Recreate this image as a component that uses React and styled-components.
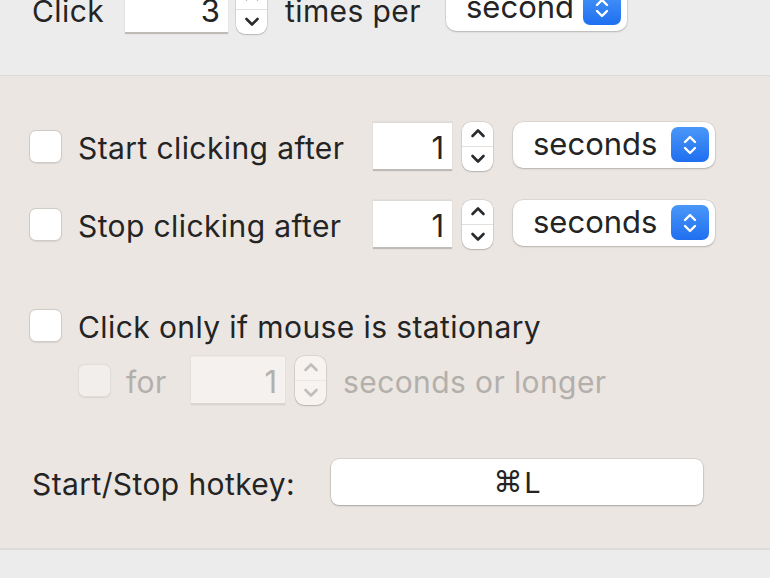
import React from "react";
import styled, { createGlobalStyle } from "styled-components";

const Global = createGlobalStyle`
  html, body { margin: 0; padding: 0; background: #ececec; }
  body { font-family: Inter, "Noto Sans", "DejaVu Sans", sans-serif; color: #242424; }
  * { box-sizing: border-box; }
`;

const Window = styled.div`
  width: 770px;
  height: 578px;
  overflow: hidden;
  display: flex;
  flex-direction: column;
  background: #ececec;
`;

const TopSection = styled.section`
  height: 76px;
  padding-left: 32px;
  border-bottom: 1px solid #dbd9d8;
  flex: none;
`;

const MainSection = styled.section`
  background: #ebe6e2;
  padding: 45px 0 41px 29px;
  border-bottom: 2px solid #dedad7;
  display: flex;
  flex-direction: column;
  flex: none;
`;

const Row = styled.div`
  display: flex;
  align-items: center;
  height: 50px;
  margin-top: ${(p) => p.$mt || 0}px;
  padding-left: ${(p) => p.$indent || 0}px;
`;

const TopRow = styled(Row)`
  margin-top: -16px;
`;

const Label = styled.span`
  font-size: 30px;
  letter-spacing: 0.4px;
  color: ${(p) => (p.$disabled ? "#b3afab" : "#242424")};
  width: ${(p) => (p.$w ? p.$w + "px" : "auto")};
  margin-left: ${(p) => p.$ml || 0}px;
  padding-top: 3px;
  flex: none;
  white-space: nowrap;
  line-height: 1;
`;

const Check = styled.span`
  width: 33px;
  height: 33px;
  flex: none;
  border-radius: 7px;
  background: ${(p) => (p.$disabled ? "#f1eeeb" : "#ffffff")};
  border: 1px solid ${(p) => (p.$disabled ? "#e2deda" : "#cfcbc7")};
  box-shadow: 0 0.5px 1px rgba(0, 0, 0, 0.08);
`;

const NumField = styled.div`
  width: ${(p) => p.$w}px;
  height: 49px;
  flex: none;
  margin-left: ${(p) => p.$ml || 0}px;
  background: ${(p) => (p.$disabled ? "#f4f1ef" : "#ffffff")};
  border-top: 1px solid ${(p) => (p.$disabled ? "#ece8e5" : "#dedad6")};
  border-bottom: 2px solid ${(p) => (p.$disabled ? "#d9d5d2" : "#bfbbb7")};
  box-shadow: 0 0 0 0.5px rgba(0, 0, 0, 0.06);
  display: flex;
  align-items: center;
  justify-content: flex-end;
  padding: 3px 8px 0 0;
  font-size: 31px;
  color: ${(p) => (p.$disabled ? "#b3afab" : "#242424")};
`;

const StepperBox = styled.div`
  width: 31px;
  height: 49px;
  flex: none;
  margin-left: ${(p) => p.$ml ?? 10}px;
  border-radius: 9px;
  background: ${(p) => (p.$disabled ? "#f6f3f1" : "#ffffff")};
  box-shadow: 0 0 0 0.5px rgba(0, 0, 0, 0.14), 0 1px 1.5px rgba(0, 0, 0, 0.16);
  display: flex;
  flex-direction: column;
  align-items: center;
  justify-content: space-between;
  padding: 5px 0 6px;
  position: relative;
  &::after {
    content: "";
    position: absolute;
    left: 0;
    right: 0;
    top: 24px;
    height: 1px;
    background: ${(p) => (p.$disabled ? "#ebe7e4" : "#e2dfdc")};
  }
`;

const Chevron = ({ up, color }) => (
  <svg width="16" height="12" viewBox="0 0 16 12">
    <path
      d={up ? "M2.5 9 L8 3.5 L13.5 9" : "M2.5 3 L8 8.5 L13.5 3"}
      fill="none"
      stroke={color}
      strokeWidth="2.6"
      strokeLinecap="round"
      strokeLinejoin="round"
    />
  </svg>
);

const Stepper = ({ disabled, ml }) => {
  const c = disabled ? "#c2beba" : "#2a2a2a";
  return (
    <StepperBox $disabled={disabled} $ml={ml}>
      <Chevron up color={c} />
      <Chevron color={c} />
    </StepperBox>
  );
};

const PopupBox = styled.div`
  width: ${(p) => p.$w}px;
  height: 46px;
  flex: none;
  margin-left: ${(p) => p.$ml || 0}px;
  margin-top: -3px;
  border-radius: 10px;
  background: #ffffff;
  box-shadow: 0 0 0 0.5px rgba(0, 0, 0, 0.12), 0 1px 2px rgba(0, 0, 0, 0.18);
  display: flex;
  align-items: center;
  justify-content: space-between;
  padding: 0 6px 0 20px;
  font-size: 31px;
  letter-spacing: 0px;
  color: #242424;
  span { margin-top: -2px; }
`;

const BlueCap = styled.div`
  width: 38px;
  height: 35px;
  border-radius: 7px;
  background: linear-gradient(#4a97f8, #1f6ff0);
  display: flex;
  align-items: center;
  justify-content: center;
`;

const Popup = ({ w, ml, children }) => (
  <PopupBox $w={w} $ml={ml}>
    <span>{children}</span>
    <BlueCap>
      <svg width="18" height="26" viewBox="0 0 18 26">
        <path d="M4 10 L9 5 L14 10" fill="none" stroke="#fff" strokeWidth="2.4" strokeLinecap="round" strokeLinejoin="round" />
        <path d="M4 16 L9 21 L14 16" fill="none" stroke="#fff" strokeWidth="2.4" strokeLinecap="round" strokeLinejoin="round" />
      </svg>
    </BlueCap>
  </PopupBox>
);

const HotkeyButton = styled.div`
  width: 372px;
  height: 46px;
  border-radius: 8px;
  background: #ffffff;
  box-shadow: 0 0 0 0.5px rgba(0, 0, 0, 0.16), 0 1px 2px rgba(0, 0, 0, 0.22);
  display: flex;
  align-items: center;
  justify-content: center;
  font-size: 29px;
  color: #242424;
  font-family: "DejaVu Sans", Inter, sans-serif;
  span { font-family: Inter, sans-serif; margin-left: 2px; }
`;

export default function App() {
  return (
    <>
      <Global />
      <Window>
        <TopSection>
          <TopRow>
            <Label $w={93}>Click</Label>
            <NumField $w={103}>3</NumField>
            <Stepper ml={8} />
            <Label $ml={18} $w={161}>times per</Label>
            <Popup w={181}>second</Popup>
          </TopRow>
        </TopSection>
        <MainSection>
          <Row>
            <Check />
            <Label $ml={16} $w={295}>Start clicking after</Label>
            <NumField $w={79}>1</NumField>
            <Stepper />
            <Popup w={202} ml={20}>seconds</Popup>
          </Row>
          <Row $mt={28}>
            <Check />
            <Label $ml={16} $w={295}>Stop clicking after</Label>
            <NumField $w={79}>1</NumField>
            <Stepper />
            <Popup w={202} ml={20}>seconds</Popup>
          </Row>
          <Row $mt={51}>
            <Check />
            <Label $ml={16}>Click only if mouse is stationary</Label>
          </Row>
          <Row $mt={5} $indent={49}>
            <Check $disabled />
            <Label $ml={15} $w={65} $disabled>for</Label>
            <NumField $w={94} $disabled>1</NumField>
            <Stepper disabled />
            <Label $ml={17} $disabled>seconds or longer</Label>
          </Row>
          <Row $mt={52}>
            <Label $ml={3} $w={299}>Start/Stop hotkey:</Label>
            <HotkeyButton>⌘<span>L</span></HotkeyButton>
          </Row>
        </MainSection>
      </Window>
    </>
  );
}
